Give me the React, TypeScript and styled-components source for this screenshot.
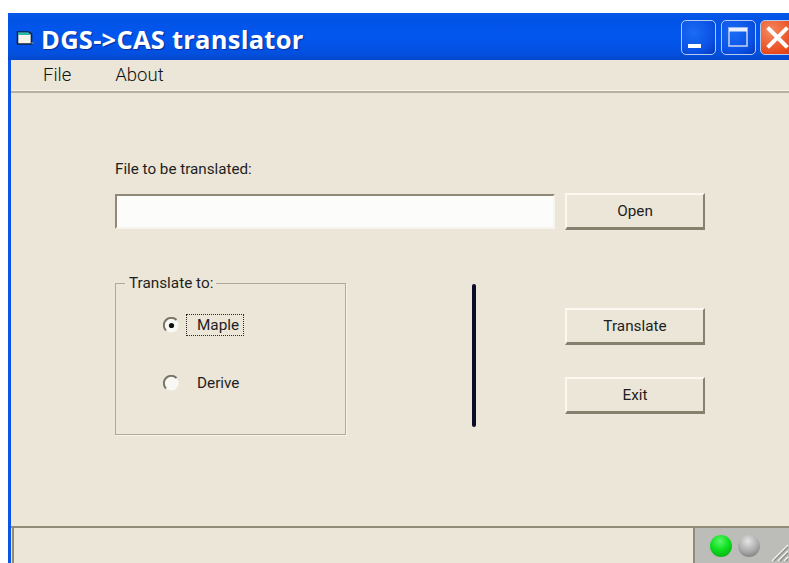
import React from "react";
import styled, { createGlobalStyle } from "styled-components";

const Global = createGlobalStyle`
  html, body { margin: 0; padding: 0; background: #ffffff; overflow: hidden; }
  body { font-family: Roboto, "Liberation Sans", Arial, sans-serif; }
`;

const Page = styled.div`
  width: 789px;
  height: 563px;
  padding: 13px 0 0 8px;
  box-sizing: border-box;
  overflow: hidden;
`;

const Frame = styled.div`
  width: 781px;
  height: 550px;
  display: flex;
  flex-direction: column;
  background: #ece6d8;
  border-left: 3px solid #0a55e6;
  box-sizing: border-box;
`;

const TitleBar = styled.div`
  height: 47px;
  margin-left: -3px;
  flex: none;
  display: flex;
  align-items: center;
  padding: 0 0 0 8px;
  overflow: hidden;
  background: linear-gradient(180deg, #0a5ae8 0%, #0254e6 12%, #0356ee 50%, #0350e0 85%, #0448cc 100%);
`;

const TitleIcon = styled.svg`
  width: 19px;
  height: 17px;
  flex: none;
  margin: 3px 6px 0 0;
`;

const TitleText = styled.div`
  flex: 1;
  font-family: "Open Sans", sans-serif;
  font-weight: 700;
  font-size: 25.5px;
  letter-spacing: 0.25px;
  color: #ffffff;
  text-shadow: 1px 1px 1px #0a2f9c;
  white-space: nowrap;
  padding-top: 5px;
`;

const Controls = styled.div`
  display: flex;
  gap: 4.5px;
  width: 108px;
  flex: none;
  padding-top: 1px;
`;

const Control = styled.div<{ $danger?: boolean }>`
  width: 35px;
  height: 35px;
  flex: none;
  box-sizing: border-box;
  border: 1.5px solid #b4cbf2;
  border-radius: 5px;
  display: flex;
  align-items: center;
  justify-content: center;
  background: ${(p) =>
    p.$danger
      ? "radial-gradient(circle at 30% 30%, #f58a60, #e84a1c 70%, #d43c10)"
      : "radial-gradient(circle at 35% 35%, #1a6cf5, #0a50e4 65%, #0438bc)"};
`;

const ControlGlyph = styled.svg`
  width: 33px;
  height: 33px;
  display: block;
  flex: none;
`;

const MenuBar = styled.div`
  height: 30px;
  flex: none;
  display: flex;
  align-items: center;
  gap: 44px;
  padding-left: 32px;
  font-size: 18.5px;
  font-weight: 300;
  color: #111111;
`;

const MenuItem = styled.span`
  line-height: 27px;
`;

const MenuRule = styled.div`
  height: 3px;
  flex: none;
  background: linear-gradient(180deg, #f6f4ec 0 1.5px, #b6b1a0 1.5px);
`;

const Body = styled.div`
  flex: 1;
  display: flex;
  flex-direction: column;
  padding: 66px 0 0 104px;
  min-height: 0;
`;

const FieldLabel = styled.label`
  font-size: 15.2px;
  line-height: 20px;
  height: 20px;
  color: #1e1e1e;
`;

const FileRow = styled.div`
  display: flex;
  gap: 10px;
  margin-top: 14px;
  align-items: center;
`;

const PathInput = styled.div`
  width: 440px;
  height: 35px;
  box-sizing: border-box;
  background: #fcfcfb;
  border-top: 2px solid #8f8a78;
  border-left: 2px solid #8f8a78;
  border-right: 2px solid #f6f4ec;
  border-bottom: 2px solid #f6f4ec;
`;

const Button = styled.div`
  width: 140px;
  height: 37px;
  box-sizing: border-box;
  display: flex;
  align-items: center;
  justify-content: center;
  padding-bottom: 1px;
  background: #ece6d8;
  border-top: 2px solid #faf8f1;
  border-left: 2px solid #faf8f1;
  border-right: 2px solid #86816f;
  border-bottom: 3px solid #86816f;
  font-size: 15.3px;
  color: #1e1e1e;
`;

const LowerRow = styled.div`
  display: flex;
  margin-top: 45px;
  align-items: flex-start;
`;

const GroupBox = styled.fieldset`
  width: 231px;
  height: 160px;
  box-sizing: border-box;
  margin: 0;
  padding: 0;
  border: 1px solid #aeaa98;
  box-shadow: 1px 1px 0 #f6f4ec;
  font-size: 15.3px;
  color: #1e1e1e;
`;

const GroupTitle = styled.legend`
  margin-left: 9px;
  padding: 0 3px 0 4px;
  line-height: 16px;
`;

const RadioList = styled.div`
  display: flex;
  flex-direction: column;
  gap: 36px;
  padding: 23px 0 0 47px;
`;

const RadioRow = styled.div`
  display: flex;
  align-items: center;
  gap: 6px;
  height: 22px;
`;

const RadioDot = styled.svg`
  width: 17px;
  height: 17px;
  flex: none;
`;

const RadioCaption = styled.span<{ $focused?: boolean }>`
  width: 58px;
  height: 22px;
  box-sizing: border-box;
  padding-left: 10px;
  line-height: 20px;
  border: 1px ${(p) => (p.$focused ? "dotted #2a2a2a" : "solid transparent")};
`;

const Divider = styled.div`
  width: 4px;
  height: 143px;
  margin: 9px 0 0 126px;
  border-radius: 2px;
  background: #0b0b2a;
  flex: none;
`;

const ActionColumn = styled.div`
  display: flex;
  flex-direction: column;
  gap: 32px;
  margin: 33px 0 0 89px;
`;

const StatusBar = styled.div`
  height: 35px;
  flex: none;
  margin-top: auto;
  display: flex;
  background: #ece6d8;
  border-top: 2px solid #918c7a;
`;

const StatusMessage = styled.div`
  flex: 1;
  margin-left: 1px;
  border-left: 2px solid #918c7a;
`;

const StatusLights = styled.div`
  width: 96px;
  flex: none;
  box-sizing: border-box;
  background: #bcbcb8;
  border-left: 2px solid #918c7a;
  display: flex;
  align-items: center;
  gap: 6px;
  padding-left: 15px;
  position: relative;
`;

const Lamp = styled.div<{ $on?: boolean }>`
  width: 22px;
  height: 22px;
  border-radius: 50%;
  flex: none;
  background: ${(p) =>
    p.$on
      ? "radial-gradient(circle at 45% 28%, #5cf56c, #0ee01e 45%, #08a814 90%)"
      : "radial-gradient(circle at 45% 28%, #e4e4e4, #a8a8a8 55%, #6e6e6e 95%)"};
`;

const Grip = styled.svg`
  position: absolute;
  right: 0;
  bottom: 1px;
  width: 20px;
  height: 20px;
`;

export default function App() {
  return (
    <>
      <Global />
      <Page>
        <Frame>
          <TitleBar>
            <TitleIcon viewBox="0 0 19 17">
              <path d="M1.5 2h11l3 2v10H1.5z" fill="#f4f4e8" stroke="#10203c" strokeWidth="1.6" />
              <path d="M2 2.5h10.5l2 2.5H2z" fill="#2ab8b0" />
              <path d="M15.5 12l3 1-3 1z" fill="#7a8aa0" />
            </TitleIcon>
            <TitleText>DGS-&gt;CAS translator</TitleText>
            <Controls>
              <Control>
                <ControlGlyph viewBox="0 0 33 33">
                  <rect x="6" y="23" width="13" height="4" fill="#ffffff" />
                </ControlGlyph>
              </Control>
              <Control>
                <ControlGlyph viewBox="0 0 33 33">
                  <rect x="7" y="7" width="18" height="18" fill="none" stroke="#b9cdf2" strokeWidth="1.6" />
                  <rect x="7" y="7" width="18" height="3.5" fill="#e8effc" />
                </ControlGlyph>
              </Control>
              <Control $danger>
                <ControlGlyph viewBox="0 0 33 33">
                  <path d="M8 8l17 17M25 8L8 25" stroke="#ffffff" strokeWidth="4" strokeLinecap="square" />
                </ControlGlyph>
              </Control>
            </Controls>
          </TitleBar>
          <MenuBar>
            <MenuItem>File</MenuItem>
            <MenuItem>About</MenuItem>
          </MenuBar>
          <MenuRule />
          <Body>
            <FieldLabel>File to be translated:</FieldLabel>
            <FileRow>
              <PathInput />
              <Button>Open</Button>
            </FileRow>
            <LowerRow>
              <GroupBox>
                <GroupTitle>Translate to:</GroupTitle>
                <RadioList>
                  <RadioRow>
                    <RadioDot viewBox="0 0 17 17">
                      <circle cx="8.5" cy="8.5" r="7" fill="#f8f8f4" />
                      <path d="M3 13.5A7 7 0 0 1 13.5 3" fill="none" stroke="#787466" strokeWidth="2" />
                      <circle cx="8.5" cy="8.5" r="2.6" fill="#111111" />
                    </RadioDot>
                    <RadioCaption $focused>Maple</RadioCaption>
                  </RadioRow>
                  <RadioRow>
                    <RadioDot viewBox="0 0 17 17">
                      <circle cx="8.5" cy="8.5" r="7" fill="#f8f8f4" />
                      <path d="M3 13.5A7 7 0 0 1 13.5 3" fill="none" stroke="#787466" strokeWidth="2" />
                    </RadioDot>
                    <RadioCaption>Derive</RadioCaption>
                  </RadioRow>
                </RadioList>
              </GroupBox>
              <Divider />
              <ActionColumn>
                <Button>Translate</Button>
                <Button>Exit</Button>
              </ActionColumn>
            </LowerRow>
          </Body>
          <StatusBar>
            <StatusMessage />
            <StatusLights>
              <Lamp $on />
              <Lamp />
              <Grip viewBox="0 0 20 20">
                <path d="M3 19L19 3M9 19L19 9M15 19l4-4" stroke="#f2f2ee" strokeWidth="1.4" />
                <path d="M5 19L19 5M11 19l8-8M17 19l2-2" stroke="#8a8a84" strokeWidth="1.2" />
              </Grip>
            </StatusLights>
          </StatusBar>
        </Frame>
      </Page>
    </>
  );
}
